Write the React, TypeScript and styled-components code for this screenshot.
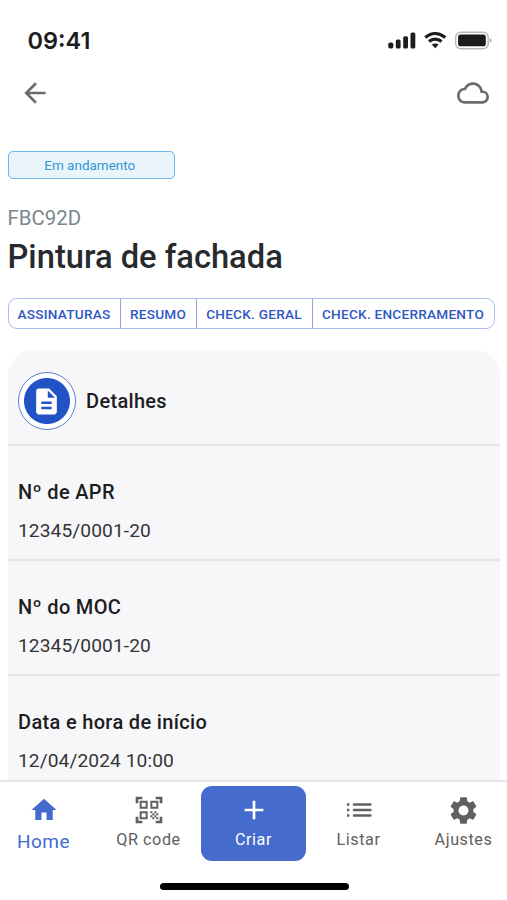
import React from "react";
import styled, { createGlobalStyle } from "styled-components";

const GlobalStyle = createGlobalStyle`
  * { box-sizing: border-box; }
  body { margin: 0; background: #fff; font-family: Roboto, sans-serif; }
  h1, h2, h3, p { margin: 0; }
  button { font-family: inherit; cursor: pointer; }
  svg { display: block; flex: none; }
`;

const Screen = styled.div`
  width: 507px;
  height: 900px;
  display: flex;
  flex-direction: column;
  overflow: hidden;
  background: #fff;
`;

const StatusBar = styled.div`
  height: 70px;
  flex: none;
  display: flex;
  align-items: flex-start;
  justify-content: space-between;
  padding: 26px 14px 0 27.5px;
`;

const Clock = styled.span`
  font: 600 23.5px/30px Inter, sans-serif;
  color: #1c1c1c;
`;

const StatusIcons = styled.div`
  display: flex;
  gap: 8px;
  padding-top: 5px;
`;

const AppBar = styled.header`
  height: 46px;
  flex: none;
  display: flex;
  justify-content: space-between;
  align-items: center;
  padding: 0 18px 0 19px;
`;

const IconButton = styled.button`
  border: 0;
  padding: 0;
  background: none;
  color: #6c6c6c;
`;

const Content = styled.main`
  flex: 1;
  min-height: 0;
  overflow: hidden;
  padding: 35px 7px 0 7.5px;
`;

const StatusTag = styled.div`
  width: 167.5px;
  height: 28px;
  padding-right: 3px;
  border: 1px solid #6db8e4;
  border-radius: 5px;
  background: #eaf5fb;
  color: #3296d3;
  font-size: 13.5px;
  line-height: 27px;
  text-align: center;
`;

const Code = styled.p`
  margin-top: 25px;
  font-size: 20.4px;
  line-height: 28px;
  color: #7c868c;
`;

const Title = styled.h1`
  font-size: 32.7px;
  font-weight: 500;
  line-height: 44px;
  margin-top: 3px;
  white-space: nowrap;
  color: #262a2d;
`;

const Tabs = styled.div`
  width: 487px;
  height: 31px;
  display: flex;
  margin-top: 19px;
  border: 1px solid #a9bceb;
  border-radius: 9px;
`;

const Tab = styled.button<{ $width: number }>`
  width: ${(p) => p.$width}px;
  padding: 0;
  border: 0;
  border-right: 1px solid #91a6df;
  background: none;
  color: #2f58c4;
  font-size: 13.6px;
  font-weight: 500;
  line-height: 30px;
  letter-spacing: 0.25px;
  white-space: nowrap;
  &:last-child { border-right: 0; }
`;

const Card = styled.section`
  width: 492.5px;
  margin-top: 21px;
  border-radius: 26px 26px 0 0;
  background: #f7f7fa;
`;

const CardHeader = styled.div`
  height: 96px;
  display: flex;
  align-items: center;
  gap: 10.5px;
  padding: 8px 10px 0;
  border-bottom: 2px solid #e5e5e8;
`;

const DocumentBadge = styled.div`
  width: 58px;
  height: 58px;
  display: grid;
  place-items: center;
  border: 1px solid #5a7bd2;
  border-radius: 50%;
  background: radial-gradient(circle, #2352c7 22.5px, #fff 23.5px);
  color: #fff;
`;

const CardTitle = styled.h2`
  font-size: 20px;
  font-weight: 500;
  line-height: 26px;
  letter-spacing: 0.32px;
  color: #1d1d1f;
`;

const Field = styled.div`
  height: 115px;
  padding: 32px 10.5px 0;
  border-bottom: 2px solid #e5e5e8;
`;

const FieldLabel = styled.h3`
  font-size: 20px;
  font-weight: 500;
  line-height: 28px;
  letter-spacing: 0.33px;
  color: #1d1d1f;
`;

const FieldValue = styled.p`
  margin-top: 11px;
  font-size: 19.2px;
  line-height: 28px;
  letter-spacing: 0.08px;
  color: #343436;
`;

const BottomNav = styled.nav`
  height: 85px;
  flex: none;
  display: grid;
  grid-template-columns: repeat(5, 105px);
  margin-left: -9px;
  border-top: 2px solid #e8e8ea;
`;

const NavItem = styled.button<{ $tone?: "active" | "primary" }>`
  height: 75px;
  margin-top: 4px;
  border: 0;
  border-radius: 11px;
  padding: 7.5px 0 0;
  display: flex;
  flex-direction: column;
  align-items: center;
  background: ${(p) => (p.$tone === "primary" ? "#456ccd" : "transparent")};
  color: ${(p) => (p.$tone === "primary" ? "#fff" : p.$tone === "active" ? "#456ccd" : "#606060")};
`;

const NavGlyph = styled.span`
  height: 33px;
  display: flex;
  align-items: center;
`;

const NavLabel = styled.span<{ $large?: boolean }>`
  font-size: ${(p) => (p.$large ? 19 : 16.2)}px;
  line-height: 26px;
  letter-spacing: ${(p) => (p.$large ? 0.5 : 0.55)}px;
  margin-top: ${(p) => (p.$large ? 2 : 0)}px;
`;

const HomeIndicatorArea = styled.div`
  height: 35px;
  flex: none;
  padding: 17.5px 0 0 159.5px;
`;

const HomeIndicator = styled.div`
  width: 189px;
  height: 7px;
  border-radius: 4px;
  background: #000;
`;

const glyphs = {
  back: "M20 11H7.83l5.59-5.59L12 4l-8 8 8 8 1.41-1.41L7.83 13H20v-2z",
  cloud:
    "M12 6c2.62 0 4.88 1.86 5.39 4.43l.3 1.5 1.53.11A2.98 2.98 0 0 1 22 15c0 1.65-1.35 3-3 3H6c-2.21 0-4-1.79-4-4 0-2.05 1.53-3.76 3.56-3.97l1.07-.11.5-.95A5.469 5.469 0 0 1 12 6m0-2C9.11 4 6.6 5.64 5.35 8.04A5.994 5.994 0 0 0 0 14c0 3.31 2.69 6 6 6h13c2.76 0 5-2.24 5-5 0-2.64-2.05-4.78-4.65-4.96A7.49 7.49 0 0 0 12 4z",
  document:
    "M14 2H6c-1.1 0-1.99.9-1.99 2L4 20c0 1.1.89 2 1.99 2H18c1.1 0 2-.9 2-2V8l-6-6zm2 16H8v-2h8v2zm0-4H8v-2h8v2zm-3-5V3.5L18.5 9H13z",
  home: "M10 20v-6h4v6h5v-8h3L12 3 2 12h3v8z",
  qr: "M9.5 6.5v3h-3v-3h3M11 5H5v6h6V5zm-1.5 9.5v3h-3v-3h3M11 13H5v6h6v-6zm6.5-6.5v3h-3v-3h3M19 5h-6v6h6V5zm-6 8h1.5v1.5H13V13zm1.5 1.5H16V16h-1.5v-1.5zM16 13h1.5v1.5H16V13zm-3 3h1.5v1.5H13V16zm1.5 1.5H16V19h-1.5v-1.5zM16 16h1.5v1.5H16V16zm1.5-1.5H19V16h-1.5v-1.5zm0 3H19V19h-1.5v-1.5zM22 7h-2V4h-3V2h5v5zm0 15v-5h-2v3h-3v2h5zM2 22h5v-2H4v-3H2v5zM2 2v5h2V4h3V2H2z",
  plus: "M19 13h-6v6h-2v-6H5v-2h6V5h2v6h6v2z",
  list: "M8.3 6.9h12.2q1 0 1 1t-1 1H8.3q-1 0-1-1t1-1zM8.3 11h12.2q1 0 1 1t-1 1H8.3q-1 0-1-1t1-1zM8.3 15.1h12.2q1 0 1 1t-1 1H8.3q-1 0-1-1t1-1zM3 7h1.8v1.8H3zM3 11.1h1.8v1.8H3zM3 15.2h1.8V17H3z",
  gear: "M19.14 12.94c.04-.3.06-.61.06-.94 0-.32-.02-.64-.07-.94l2.03-1.58c.18-.14.23-.41.12-.61l-1.92-3.32c-.12-.22-.37-.29-.59-.22l-2.39.96c-.5-.38-1.03-.7-1.62-.94l-.36-2.54c-.04-.24-.24-.41-.48-.41h-3.84c-.24 0-.43.17-.47.41l-.36 2.54c-.59.24-1.13.57-1.62.94l-2.39-.96c-.22-.08-.47 0-.59.22L2.74 8.87c-.12.21-.08.47.12.61l2.03 1.58c-.05.3-.09.63-.09.94s.02.64.07.94l-2.03 1.58c-.18.14-.23.41-.12.61l1.92 3.32c.12.22.37.29.59.22l2.39-.96c.5.38 1.03.7 1.62.94l.36 2.54c.05.24.24.41.48.41h3.84c.24 0 .44-.17.47-.41l.36-2.54c.59-.24 1.13-.56 1.62-.94l2.39.96c.22.08.47 0 .59-.22l1.92-3.32c.12-.22.07-.47-.12-.61l-2.01-1.58zM12 15.6c-1.98 0-3.6-1.62-3.6-3.6s1.62-3.6 3.6-3.6 3.6 1.62 3.6 3.6-1.62 3.6-3.6 3.6z",
};

type GlyphName = keyof typeof glyphs;

function Glyph({ name, size }: { name: GlyphName; size: number }) {
  return (
    <svg width={size} height={size} viewBox="0 0 24 24" fill="currentColor" aria-hidden="true">
      <path d={glyphs[name]} />
    </svg>
  );
}

function SignalIcon() {
  return (
    <svg width="28" height="18" viewBox="0 0 28 18" fill="#1c1c1c">
      <rect x="0.3" y="11.5" width="5" height="6" rx="1.7" />
      <rect x="7.8" y="8.6" width="4.8" height="8.9" rx="1.5" />
      <rect x="15.2" y="5.2" width="4.8" height="12.3" rx="1.5" />
      <rect x="22.5" y="1.6" width="4.8" height="15.9" rx="1.5" />
    </svg>
  );
}

function WifiIcon() {
  return (
    <svg width="23" height="18" viewBox="0 0 23 18" fill="none" stroke="#1c1c1c" strokeWidth="3.2">
      <path d="M1.3 6.5Q6 2.5 11.2 2.5T21.3 6.5" />
      <path d="M5 10.5Q7.8 8.1 11.2 8.1T17.6 10.5" />
      <path d="M7.8 13.6Q11.2 11.2 14.6 13.6L11.2 17.2z" fill="#1c1c1c" stroke="none" />
    </svg>
  );
}

function BatteryIcon() {
  return (
    <svg width="38" height="20" viewBox="0 0 38 20">
      <rect x="0.7" y="1.2" width="32.5" height="16.5" rx="5" fill="#fff" stroke="#b9b9b9" strokeWidth="1.4" />
      <rect x="3.1" y="3.6" width="27.7" height="11.7" rx="2.6" fill="#1c1c1c" />
      <path d="M34.7 7v4.8q1.8-.8 1.8-2.4T34.7 7z" fill="#aaa" />
    </svg>
  );
}

const tabs = [
  { label: "ASSINATURAS", width: 112 },
  { label: "RESUMO", width: 76 },
  { label: "CHECK. GERAL", width: 116 },
  { label: "CHECK. ENCERRAMENTO", width: 181 },
];

const fields = [
  { label: "Nº de APR", value: "12345/0001-20" },
  { label: "Nº do MOC", value: "12345/0001-20" },
  { label: "Data e hora de início", value: "12/04/2024 10:00" },
];

const navItems: { label: string; icon: GlyphName; size: number; tone?: "active" | "primary" }[] = [
  { label: "Home", icon: "home", size: 30, tone: "active" },
  { label: "QR code", icon: "qr", size: 32 },
  { label: "Criar", icon: "plus", size: 32, tone: "primary" },
  { label: "Listar", icon: "list", size: 32 },
  { label: "Ajustes", icon: "gear", size: 33 },
];

export default function App() {
  return (
    <>
      <GlobalStyle />
      <Screen>
        <StatusBar>
          <Clock>09:41</Clock>
          <StatusIcons>
            <SignalIcon />
            <WifiIcon />
            <BatteryIcon />
          </StatusIcons>
        </StatusBar>
        <AppBar>
          <IconButton aria-label="Voltar"><Glyph name="back" size={32} /></IconButton>
          <IconButton aria-label="Sincronizar"><Glyph name="cloud" size={32} /></IconButton>
        </AppBar>
        <Content>
          <StatusTag>Em andamento</StatusTag>
          <Code>FBC92D</Code>
          <Title>Pintura de fachada</Title>
          <Tabs>
            {tabs.map((t) => <Tab key={t.label} $width={t.width}>{t.label}</Tab>)}
          </Tabs>
          <Card>
            <CardHeader>
              <DocumentBadge><Glyph name="document" size={31} /></DocumentBadge>
              <CardTitle>Detalhes</CardTitle>
            </CardHeader>
            {fields.map((f) => (
              <Field key={f.label}>
                <FieldLabel>{f.label}</FieldLabel>
                <FieldValue>{f.value}</FieldValue>
              </Field>
            ))}
          </Card>
        </Content>
        <BottomNav>
          {navItems.map((n) => (
            <NavItem key={n.label} $tone={n.tone}>
              <NavGlyph><Glyph name={n.icon} size={n.size} /></NavGlyph>
              <NavLabel $large={n.tone === "active"}>{n.label}</NavLabel>
            </NavItem>
          ))}
        </BottomNav>
        <HomeIndicatorArea><HomeIndicator /></HomeIndicatorArea>
      </Screen>
    </>
  );
}
